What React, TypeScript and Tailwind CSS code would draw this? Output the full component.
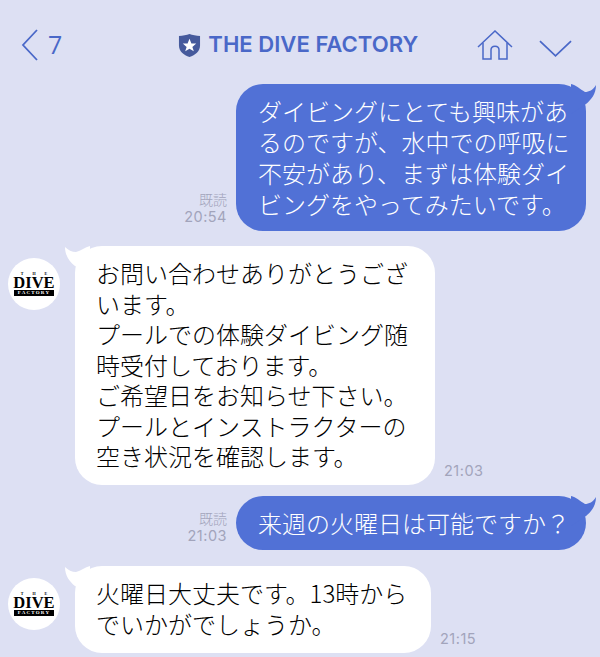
import React from 'react';

const jp = 'font-["Noto_Sans_CJK_JP","Noto_Sans",sans-serif]';

const Tail: React.FC<{ side: 'left' | 'right'; color: string }> = ({ side, color }) =>
  side === 'right' ? (
    <svg className="absolute top-0 right-[-11px]" width="26" height="30" viewBox="0 0 26 30">
      <path d="M0 0 C5 1 9 5 14 8 C18 8 22 6 25 1 C25 10 20 16 15 20 L0 30 Z" fill={color} />
    </svg>
  ) : (
    <svg className="absolute top-0 left-[-11px]" width="26" height="30" viewBox="0 0 26 30">
      <path d="M26 0 C21 1 17 5 12 6 C8 6 4 4 1 1 C1 10 6 16 11 20 L26 30 Z" fill={color} />
    </svg>
  );

const Avatar: React.FC = () => (
  <div className="w-[52px] h-[52px] rounded-full bg-white flex flex-col items-center justify-center shrink-0 font-['Liberation_Serif',serif] text-black">
    <div className="text-[4px] leading-[4px] font-bold tracking-[9px] pl-[9px]">THE</div>
    <div className="text-[16.5px] leading-[13px] font-bold">DIVE</div>
    <div className="mt-[1px] w-[40px] bg-black text-white text-[5px] leading-[6px] font-bold text-center tracking-[1.2px]">FACTORY</div>
  </div>
);

const ReadMark: React.FC<{ time: string; read?: boolean }> = ({ time, read }) => (
  <div className={`flex flex-col items-end text-[#a2a4bb] text-[14.5px] leading-[17px] ${jp}`}>
    {read && <span className="text-[14px] font-light">既読</span>}
    <span className="font-['Inter',sans-serif] tracking-[0.5px]">{time}</span>
  </div>
);

const Sent: React.FC<{ lines: string[]; time: string; className?: string }> = ({ lines, time, className }) => (
  <div className={`flex justify-end items-end pr-[14px] ${className ?? ''}`}>
    <div className="mr-[9px] mb-[6px]">
      <ReadMark time={time} read />
    </div>
    <div className={`relative w-[350px] bg-[#5171d6] rounded-[27px] text-white pl-[22px] pt-[11px] pb-[12px] ${jp}`}>
      <Tail side="right" color="#5171d6" />
      {lines.map((l) => (
        <div key={l} className="text-[24px] font-light leading-[31px] whitespace-nowrap">{l}</div>
      ))}
    </div>
  </div>
);

const Received: React.FC<{ lines: string[]; time: string; width: string; className?: string }> = ({ lines, time, width, className }) => (
  <div className={`flex items-start pl-[8px] ${className ?? ''}`}>
    <div className="mt-[12px]">
      <Avatar />
    </div>
    <div className={`relative ml-[15px] bg-white rounded-[27px] text-black pl-[21px] pt-[12px] pb-[13.5px] ${width} ${jp}`}>
      <Tail side="left" color="#ffffff" />
      {lines.map((l) => (
        <div key={l} className="text-[24px] font-light leading-[30.5px] whitespace-nowrap">{l}</div>
      ))}
    </div>
    <div className="self-end ml-[9px] mb-[6px]">
      <ReadMark time={time} />
    </div>
  </div>
);

export default function App() {
  return (
    <div className="w-[600px] h-[657px] overflow-hidden bg-[#dde0f3]">
      <header className="h-[84px] flex items-center text-[#4a68c8] pt-[6px]">
        <svg className="ml-[21px]" width="18" height="32" viewBox="0 0 18 32" fill="none" stroke="currentColor" strokeWidth="1.8">
          <path d="M16 1 L2 16 L16 31" />
        </svg>
        <span className="ml-[9px] text-[25px] font-['Open_Sans',sans-serif]">7</span>
        <svg className="ml-[116px]" width="23" height="25" viewBox="0 0 24 26">
          <path d="M1 3 C5 3 9 2 12 1 C15 2 19 3 23 3 L23 13 C23 19 18 23 12 25 C6 23 1 19 1 13 Z" fill="#465a9c" />
          <path d="M12 6 L14 11 L19 11 L15 14.5 L16.5 19 L12 16.5 L7.5 19 L9 14.5 L5 11 L10 11 Z" fill="#ffffff" />
        </svg>
        <span className="ml-[7px] w-[210px] text-[22.1px] font-semibold font-['Inter',sans-serif] whitespace-nowrap">THE DIVE FACTORY</span>
        <svg className="ml-[59px]" width="36" height="30" viewBox="0 0 36 30" fill="none" stroke="currentColor" strokeWidth="1.5">
          <path d="M1 17 L18 1 L35 17" />
          <path d="M6 13 L6 29 L14 29 L14 20 C14 15 22 15 22 20 L22 29 L30 29 L30 13" />
        </svg>
        <svg className="ml-[26px] mt-[8px]" width="33" height="18" viewBox="0 0 34 18" fill="none" stroke="currentColor" strokeWidth="1.8">
          <path d="M1 1 L17 16 L33 1" />
        </svg>
      </header>
      <Sent
        time="20:54"
        lines={['ダイビングにとても興味があ', 'るのですが、水中での呼吸に', '不安があり、まずは体験ダイ', 'ビングをやってみたいです。']}
      />
      <Received
        className="mt-[15px]"
        width="w-[360px]"
        time="21:03"
        lines={['お問い合わせありがとうござ', 'います。', 'プールでの体験ダイビング随', '時受付しております。', 'ご希望日をお知らせ下さい。', 'プールとインストラクターの', '空き状況を確認します。']}
      />
      <Sent className="mt-[11px]" time="21:03" lines={['来週の火曜日は可能ですか？']} />
      <Received
        className="mt-[16px]"
        width="w-[356px]"
        time="21:15"
        lines={['火曜日大丈夫です。13時から', 'でいかがでしょうか。']}
      />
    </div>
  );
}
